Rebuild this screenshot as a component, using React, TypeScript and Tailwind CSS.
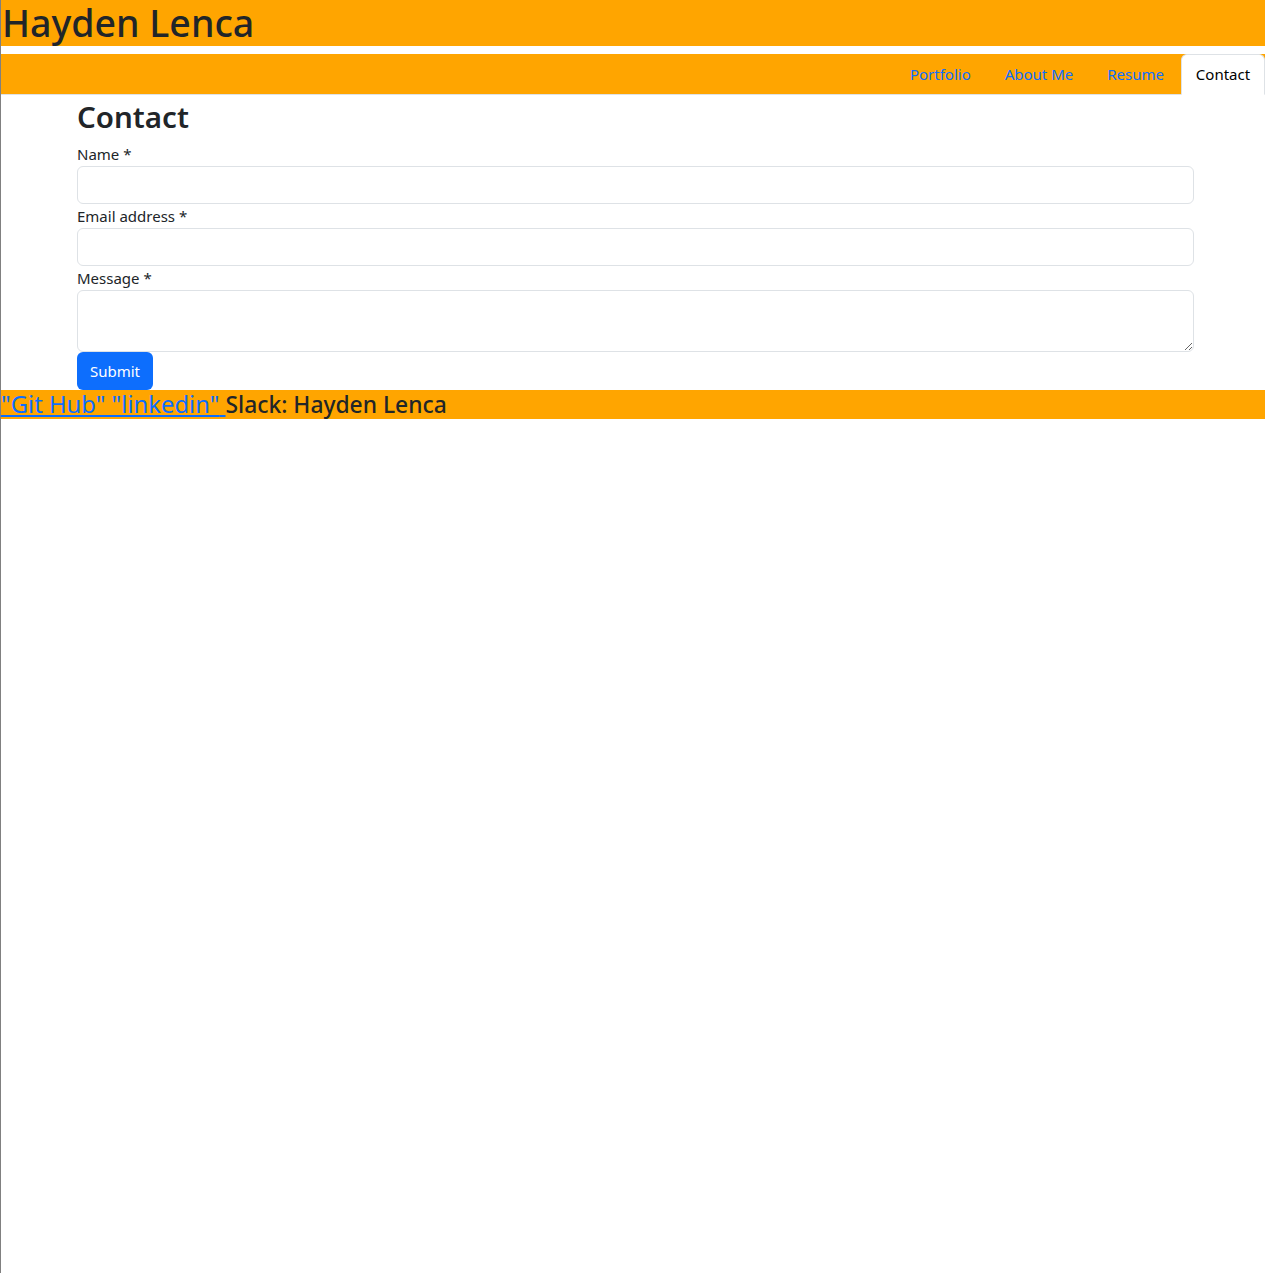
import React from "react";

const tabs = ["Portfolio", "About Me", "Resume", "Contact"];

function Field({ label, tall }: { label: string; tall?: boolean }) {
  return (
    <div className="flex flex-col">
      <label className="text-[15px] leading-[24px] text-[#212529]">{label}</label>
      {tall ? (
        <textarea className="h-[62px] w-full rounded-[6px] border border-[#dee2e6] px-3 py-1.5 resize-y" />
      ) : (
        <input className="h-[38px] w-full rounded-[6px] border border-[#dee2e6] px-3 py-1.5" />
      )}
    </div>
  );
}

export default function App() {
  return (
    <div
      className="min-h-[1273px] border-l border-[#808080] bg-white text-[#212529]"
      style={{ fontFamily: '"Segoe UI", "Noto Sans", "Open Sans", sans-serif' }}
    >
      <header className="h-[46px] bg-[#ffa500] flex items-center">
        <h1 className="text-[37.5px] leading-[46px] font-medium pl-[1px]">Hayden Lenca</h1>
      </header>

      <nav className="mt-[8px] h-[41px] bg-[#ffa500] border-b border-[#dee2e6] flex justify-end items-end">
        {tabs.map((t) => {
          const active = t === "Contact";
          return (
            <a
              key={t}
              className={
                active
                  ? "h-[41px] w-[84px] -mb-px flex items-center justify-center bg-white text-[#000] border border-b-white border-[#dee2e6] rounded-t-[6px] text-[15px]"
                  : "h-[40px] px-[17px] flex items-center text-[#0d6efd] text-[15px]"
              }
            >
              {t}
            </a>
          );
        })}
      </nav>

      <main className="pl-[76px] pr-[71px]">
        <h2 className="text-[29.5px] leading-[44px] font-semibold mb-[3px]">Contact</h2>
        <form className="flex flex-col" onSubmit={(e) => e.preventDefault()}>
          <Field label="Name *" />
          <Field label="Email address *" />
          <Field label="Message *" tall />
          <div>
            <button
              type="submit"
              className="h-[38px] w-[76px] rounded-[6px] bg-[#0d6efd] text-white text-[15px]"
            >
              Submit
            </button>
          </div>
        </form>
      </main>

      <footer className="h-[29px] bg-[#ffa500] text-[22.8px] leading-[29px] font-medium whitespace-nowrap">
        <a className="text-[#0d6efd] underline font-normal text-[23.8px]" href="#">
          "Git Hub" "linkedin"{" "}
        </a>
        <span>Slack: Hayden Lenca</span>
      </footer>
    </div>
  );
}
